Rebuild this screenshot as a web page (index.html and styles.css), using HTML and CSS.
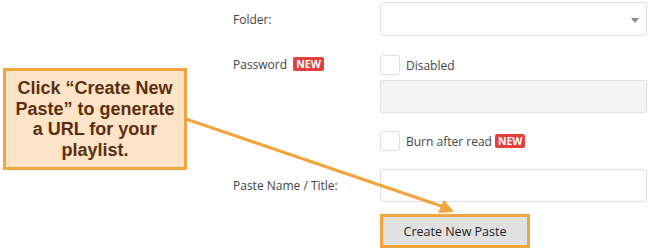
FILE: index.html
```html
<!DOCTYPE html>
<html lang="en">
<head>
  <meta charset="UTF-8">
  <title>New Paste</title>
  <link rel="stylesheet" href="styles.css">
</head>
<body>
  <form class="paste-form">
    <div class="row row-folder">
      <label>Folder:</label>
      <div class="select-box"><span class="caret"></span></div>
    </div>

    <div class="row row-password">
      <label>Password <span class="badge">NEW</span></label>
      <div class="field">
        <div class="check-line"><span class="check"></span>Disabled</div>
        <div class="input disabled"></div>
      </div>
    </div>

    <div class="row row-burn">
      <span></span>
      <div class="check-line"><span class="check"></span>Burn after read <span class="badge">NEW</span></div>
    </div>

    <div class="row row-name">
      <label>Paste Name / Title:</label>
      <div class="input"></div>
    </div>

    <div class="row row-submit">
      <span></span>
      <button type="button" class="create-btn">Create New Paste</button>
    </div>
  </form>

  <!-- annotation layer -->
  <div class="callout">Click “Create New Paste” to generate a URL for your playlist.</div>
  <svg class="arrow" width="650" height="248" viewBox="0 0 650 248">
    <line x1="186" y1="119" x2="444" y2="207" stroke="#f2a53c" stroke-width="3"/>
    <polygon points="454,212 438,213 444,200" fill="#f2a53c"/>
  </svg>
</body>
</html>
```

FILE: styles.css
```css
body {
  margin: 0;
  font-family: "Open Sans", "Noto Sans", sans-serif;
  font-size: 12px;
  color: #444;
  background: #fff;
  width: 650px;
  height: 248px;
  overflow: hidden;
  position: relative;
}
.paste-form {
  margin-left: 233px;
  padding-top: 2px;
}
.row {
  display: grid;
  grid-template-columns: 147px 267px;
  align-items: center;
}
.row-folder .select-box {
  height: 32px;
}
.row-password {
  margin-top: 19px;
  align-items: start;
}
.row-password label {
  line-height: 20px;
}
.row-burn {
  margin-top: 18px;
}
.row-name {
  margin-top: 18px;
}
.row-submit {
  margin-top: 12px;
}
.select-box, .input {
  border: 1px solid #dedede;
  border-radius: 3px;
  background: #fff;
  position: relative;
}
.caret {
  position: absolute;
  right: 7px;
  top: 15px;
  border-left: 4px solid transparent;
  border-right: 4px solid transparent;
  border-top: 5px solid #888;
}
.input {
  height: 31px;
}
.input.disabled {
  height: 31px;
  margin-top: 5px;
  background: #f5f5f5;
}
.check-line {
  display: flex;
  align-items: center;
  height: 20px;
  color: #444;
}
.check {
  width: 18px;
  height: 18px;
  border: 1px solid #dedede;
  border-radius: 3px;
  margin-right: 6px;
  background: #fff;
}
.badge {
  display: inline-block;
  background: #e2403a;
  color: #fff;
  font-weight: bold;
  font-size: 10.5px;
  line-height: 14px;
  padding: 0 3px;
  border-radius: 2px;
  margin-left: 3px;
  vertical-align: 1px;
}
.create-btn {
  width: 150px;
  height: 34px;
  background: #e1e1e1;
  border: 3px solid #f2a53c;
  color: #222;
  font-family: "Open Sans", "Noto Sans", sans-serif;
  font-size: 12.5px;
  padding: 0;
}
.callout {
  position: absolute;
  left: 3px;
  top: 68px;
  width: 166px;
  height: 96px;
  padding: 0 6px;
  border: 3px solid #f2a53c;
  background: #fde4c8;
  color: #5c2e0e;
  font-family: "Liberation Sans", Arial, sans-serif;
  font-weight: bold;
  font-size: 18px;
  line-height: 20.5px;
  text-align: center;
  display: flex;
  align-items: center;
  justify-content: center;
}
.arrow {
  position: absolute;
  left: 0;
  top: 0;
  pointer-events: none;
}
```
